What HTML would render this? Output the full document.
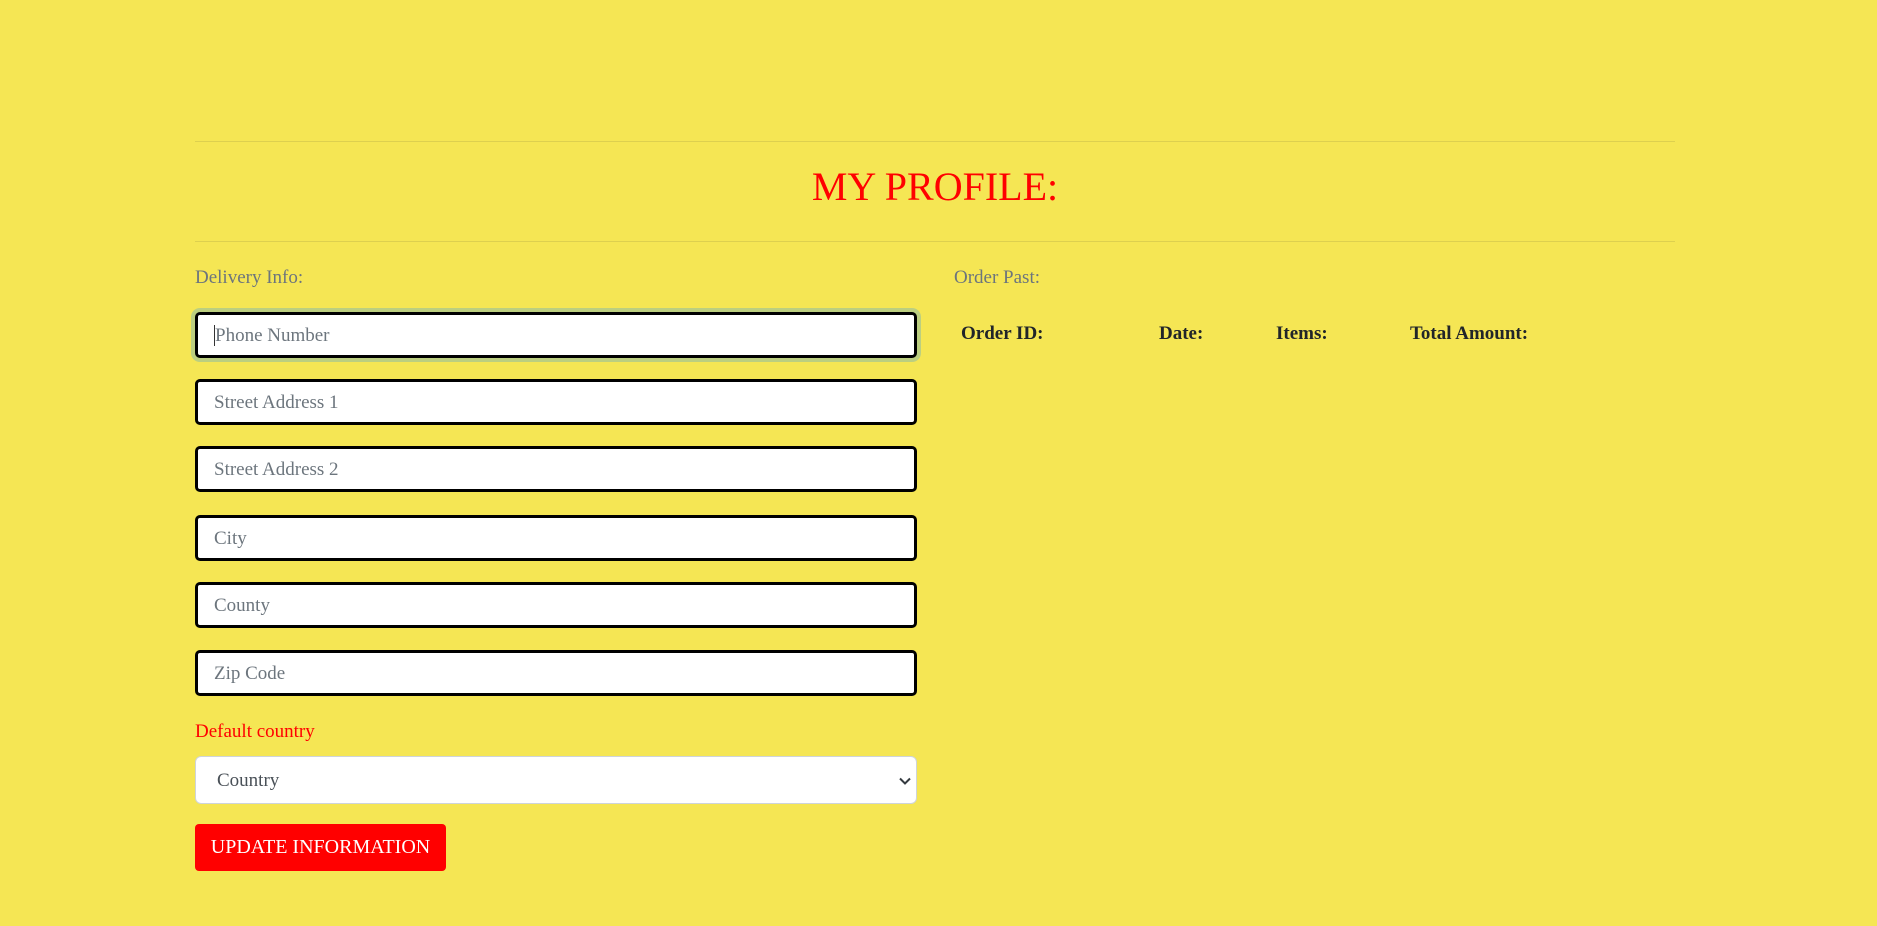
<!DOCTYPE html>
<html><head><meta charset="utf-8"><style>
html,body{margin:0;padding:0;}
body{width:1877px;height:926px;background:#f5e654;font-family:"Liberation Serif",serif;position:relative;overflow:hidden;}
.a{position:absolute;}
.hr{position:absolute;left:195px;width:1480px;height:1px;background:#ddd04f;}
h1{position:absolute;margin:0;left:195px;width:1480px;top:163px;text-align:center;color:#ff0000;font-weight:normal;font-size:40px;line-height:48px;}
.lbl{font-size:19px;color:#6c757d;line-height:24px;}
.in{position:absolute;left:195px;height:40px;border:3px solid #000;border-radius:5px;background:#fff;font-size:19px;color:#6c757d;line-height:42px;padding-left:16px;box-sizing:content-box;width:700px;}
.th{position:absolute;top:322px;font-size:19px;font-weight:bold;color:#212529;line-height:24px;}
</style></head><body>
<div class="hr" style="top:141px"></div>
<h1>MY PROFILE:</h1>
<div class="hr" style="top:241px"></div>
<div class="a lbl" style="left:195px;top:266px">Delivery Info:</div>
<div class="a lbl" style="left:954px;top:266px">Order Past:</div>
<div class="th" style="left:961px">Order ID:</div>
<div class="th" style="left:1159px">Date:</div>
<div class="th" style="left:1276px">Items:</div>
<div class="th" style="left:1410px">Total Amount:</div>
<div class="in" style="top:312px;box-shadow:0 0 0 4px #bccf80;"><span style="border-left:1px solid #333;padding-left:0px">Phone Number</span></div>
<div class="in" style="top:379px">Street Address 1</div>
<div class="in" style="top:446px">Street Address 2</div>
<div class="in" style="top:515px">City</div>
<div class="in" style="top:582px">County</div>
<div class="in" style="top:650px">Zip Code</div>
<div class="a" style="left:195px;top:720px;font-size:19px;color:#ff0000;line-height:24px">Default country</div>
<div class="a" style="left:195px;top:756px;width:720px;height:46px;border:1px solid #ced4da;border-radius:6px;background:#fff;">
<span class="a" style="left:21px;top:12px;font-size:19px;color:#495057;line-height:24px">Country</span>
<svg class="a" style="left:703px;top:19px" width="12" height="10" viewBox="0 0 12 10"><path d="M1 2.5 L6 7.5 L11 2.5" fill="none" stroke="#343a40" stroke-width="2"/></svg>
</div>
<div class="a" style="left:195px;top:824px;width:251px;height:47px;background:#ff0000;border-radius:4px;color:#fff;font-size:20px;line-height:47px;text-align:center;">UPDATE INFORMATION</div>
</body></html>
